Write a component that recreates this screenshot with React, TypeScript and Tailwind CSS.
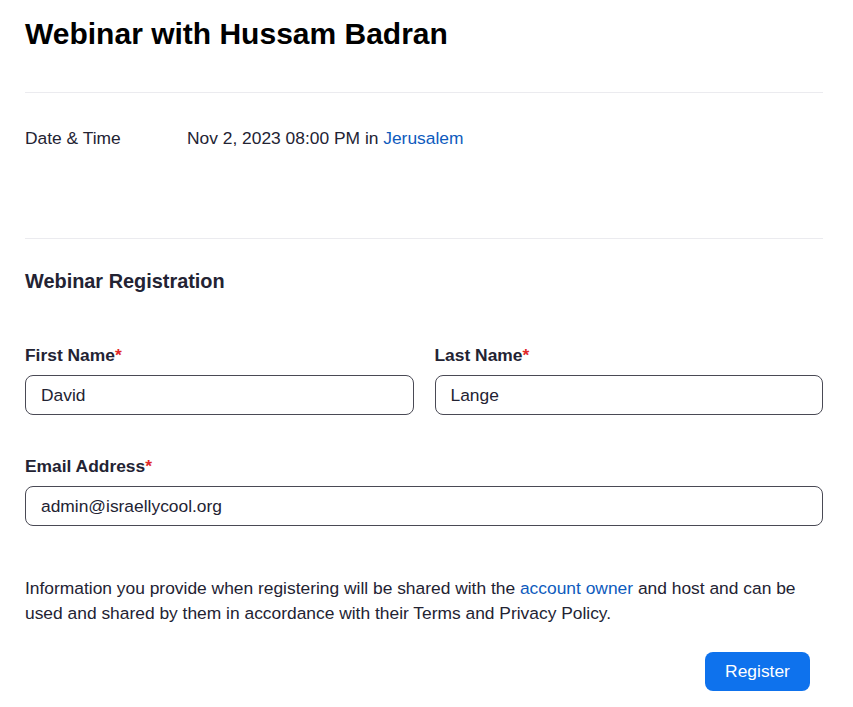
import React from "react";

const Field: React.FC<{ label: string; value: string }> = ({ label, value }) => (
    <div className="flex flex-col">
        <label className="text-[17.4px] font-bold leading-[20px] text-[#232333]">
            {label}
            <span className="text-[#e02828]">*</span>
        </label>
        <div className="mt-[10px] h-[40px] rounded-[8px] border border-[#4a4a55] px-[15px] flex items-center text-[17.4px] text-[#232333]">
            {value}
        </div>
    </div>
);

export default function App() {
    return (
        <div className="w-[853px] min-h-[707px] bg-white pl-[25px] pr-[30px] font-['Liberation_Sans',Arial,sans-serif] text-[#232333]">
            <h1 className="pt-[14px] text-[30px] font-bold leading-[40px] text-black">Webinar with Hussam Badran</h1>
            <div className="mt-[38px] h-px bg-[#ebebef]" />
            <div className="flex h-[90px] pt-[35px] text-[17.4px] leading-[20px]">
                <div className="w-[162px]">Date &amp; Time</div>
                <div>
                    Nov 2, 2023 08:00 PM in <span className="text-[#0e5bbd]">Jerusalem</span>
                </div>
            </div>
            <div className="mt-[55px] h-px bg-[#ebebef]" />
            <h2 className="mt-[30px] text-[19.9px] font-bold leading-[24px]">Webinar Registration</h2>
            <div className="mt-[52px] grid grid-cols-2 gap-x-[21px]">
                <Field label="First Name" value="David" />
                <Field label="Last Name" value="Lange" />
            </div>
            <div className="mt-[41px]">
                <Field label="Email Address" value="admin@israellycool.org" />
            </div>
            <p className="mt-[50px] text-[17.4px] leading-[25px]">
                Information you provide when registering will be shared with the{" "}
                <span className="text-[#0e5bbd]">account owner</span> and host and can be used and shared by them in
                accordance with their Terms and Privacy Policy.
            </p>
            <div className="mt-[26px] flex justify-end pr-[13px]">
                <button className="h-[39px] w-[105px] rounded-[8px] bg-[#0e72ed] text-[17.4px] text-white">Register</button>
            </div>
        </div>
    );
}
